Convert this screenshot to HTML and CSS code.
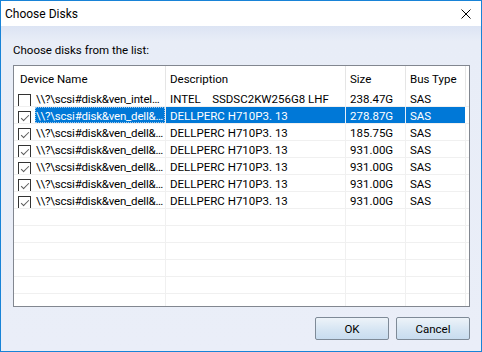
FILE: index.html
```html
<!DOCTYPE html>
<html lang="en">
<head>
    <meta charset="UTF-8">
    <title>Choose Disks</title>
    <link rel="stylesheet" href="styles.css">
</head>
<body>
    <div class="window">
        <!-- Title bar -->
        <div class="titlebar">
            <span class="title">Choose Disks</span>
            <svg class="close" width="10" height="10" viewBox="0 0 10 10">
                <path d="M0.5 0.5 L9.5 9.5 M9.5 0.5 L0.5 9.5" stroke="#000" stroke-width="1" fill="none"/>
            </svg>
        </div>

        <div class="content">
            <div class="prompt">Choose disks from the list:</div>

            <!-- Disk list -->
            <div class="list">
                <div class="row header">
                    <div class="cell c1">Device Name</div>
                    <div class="cell c2">Description</div>
                    <div class="cell c3">Size</div>
                    <div class="cell c4">Bus Type</div>
                </div>

                <div class="row">
                    <div class="cell c1"><span class="check"></span><span class="name">\\?\scsi#disk&amp;ven_intel…</span></div>
                    <div class="cell c2 pre">INTEL    SSDSC2KW256G8 LHF</div>
                    <div class="cell c3">238.47G</div>
                    <div class="cell c4">SAS</div>
                </div>
                <div class="row selected">
                    <div class="cell c1"><span class="check on"></span><span class="name">\\?\scsi#disk&amp;ven_dell&amp;…</span></div>
                    <div class="cell c2">DELLPERC H710P3. 13</div>
                    <div class="cell c3">278.87G</div>
                    <div class="cell c4">SAS</div>
                </div>
                <div class="row">
                    <div class="cell c1"><span class="check on"></span><span class="name">\\?\scsi#disk&amp;ven_dell&amp;…</span></div>
                    <div class="cell c2">DELLPERC H710P3. 13</div>
                    <div class="cell c3">185.75G</div>
                    <div class="cell c4">SAS</div>
                </div>
                <div class="row">
                    <div class="cell c1"><span class="check on"></span><span class="name">\\?\scsi#disk&amp;ven_dell&amp;…</span></div>
                    <div class="cell c2">DELLPERC H710P3. 13</div>
                    <div class="cell c3">931.00G</div>
                    <div class="cell c4">SAS</div>
                </div>
                <div class="row">
                    <div class="cell c1"><span class="check on"></span><span class="name">\\?\scsi#disk&amp;ven_dell&amp;…</span></div>
                    <div class="cell c2">DELLPERC H710P3. 13</div>
                    <div class="cell c3">931.00G</div>
                    <div class="cell c4">SAS</div>
                </div>
                <div class="row">
                    <div class="cell c1"><span class="check on"></span><span class="name">\\?\scsi#disk&amp;ven_dell&amp;…</span></div>
                    <div class="cell c2">DELLPERC H710P3. 13</div>
                    <div class="cell c3">931.00G</div>
                    <div class="cell c4">SAS</div>
                </div>
                <div class="row">
                    <div class="cell c1"><span class="check on"></span><span class="name">\\?\scsi#disk&amp;ven_dell&amp;…</span></div>
                    <div class="cell c2">DELLPERC H710P3. 13</div>
                    <div class="cell c3">931.00G</div>
                    <div class="cell c4">SAS</div>
                </div>

                <!-- empty grid rows -->
                <div class="row"><div class="cell c1"></div><div class="cell c2"></div><div class="cell c3"></div><div class="cell c4"></div></div>
                <div class="row"><div class="cell c1"></div><div class="cell c2"></div><div class="cell c3"></div><div class="cell c4"></div></div>
                <div class="row"><div class="cell c1"></div><div class="cell c2"></div><div class="cell c3"></div><div class="cell c4"></div></div>
                <div class="row"><div class="cell c1"></div><div class="cell c2"></div><div class="cell c3"></div><div class="cell c4"></div></div>
                <div class="row"><div class="cell c1"></div><div class="cell c2"></div><div class="cell c3"></div><div class="cell c4"></div></div>
                <div class="row"><div class="cell c1"></div><div class="cell c2"></div><div class="cell c3"></div><div class="cell c4"></div></div>
            </div>

            <div class="buttons">
                <button class="btn">OK</button>
                <button class="btn">Cancel</button>
            </div>
        </div>
    </div>
</body>
</html>
```

FILE: styles.css
```css
body {
    margin: 0;
    font-family: Roboto, "Liberation Sans", sans-serif;
    font-size: 11.5px;
    color: #000;
}

/* Window frame */
.window {
    width: 482px;
    height: 352px;
    box-sizing: border-box;
    border: 1px solid #1883d7;
    display: flex;
    flex-direction: column;
    background: linear-gradient(#c5d2ee 0px, #dae2f3 22px, #e8edf7 40px, #eaeef8 100%);
}

.titlebar {
    height: 25px;
    background: #fff;
    display: flex;
    align-items: center;
    justify-content: space-between;
    padding: 0 10px 0 4px;
}

.title {
    font-size: 12px;
}

.close {
    display: block;
}

/* Dialog body */
.content {
    flex: 1;
    display: flex;
    flex-direction: column;
    padding: 16px 11px 0 12px;
}

.prompt {
    height: 23px;
    line-height: 16px;
}

/* List view */
.list {
    height: 242px;
    box-sizing: border-box;
    border: 1px solid #828790;
    background: #fff;
    overflow: hidden;
}

.row {
    display: flex;
    height: 17px;
    box-sizing: border-box;
    border-bottom: 1px solid #f0f0f0;
}

.row.header {
    height: 24px;
    border-bottom: none;
}

.cell {
    box-sizing: border-box;
    border-right: 1px solid #f0f0f0;
    white-space: nowrap;
    overflow: hidden;
    padding: 2px 0 0 4px;
    line-height: 14px;
}

.header .cell {
    border-right-color: #e5e5e5;
    padding-top: 5px;
    line-height: 16px;
}

.c1 { width: 152px; }
.c2 { width: 180px; }
.c3 { width: 60px; }
.c4 { width: 60px; }

.row .c1 {
    display: flex;
    align-items: flex-start;
    padding-top: 0;
}

.header .c1 {
    display: block;
    padding: 5px 0 0 6px;
}

.pre { white-space: pre; }

.check {
    width: 13px;
    height: 13px;
    box-sizing: border-box;
    border: 1px solid #333;
    background: #fff;
    flex: none;
    margin: 4px 4px 0 0;
    position: relative;
}

.check.on::after {
    content: "";
    position: absolute;
    left: 2px;
    top: 1px;
    width: 7px;
    height: 3px;
    border-left: 1px solid #5a5a5a;
    border-bottom: 1px solid #5a5a5a;
    transform: translate(0, 2px) rotate(-45deg);
}

.name {
    flex: 1;
    align-self: stretch;
    min-width: 0;
    padding: 2px 0 0 1px;
    letter-spacing: -0.2px;
    overflow: hidden;
}

/* Selected row */
.selected .name,
.selected .c2,
.selected .c3,
.selected .c4 {
    background: #0078d7;
    color: #fff;
    border-right-color: #e8f0f8;
}

.selected .c4 {
    border-right: none;
    width: 59px;
    margin-right: 1px;
}

.selected .name {
    outline: 1px dotted #9fc9ee;
    outline-offset: -1px;
}

/* Buttons */
.buttons {
    display: flex;
    justify-content: flex-end;
    gap: 7px;
    margin-top: 10px;
}

.btn {
    width: 74px;
    height: 23px;
    font-family: Roboto, "Liberation Sans", sans-serif;
    font-size: 11.5px;
    color: #000;
    border: 1px solid #7e8a97;
    border-radius: 2px;
    background: linear-gradient(#edf3f9, #d6e5f3 55%, #c8dcef);
    padding: 0;
}
```
